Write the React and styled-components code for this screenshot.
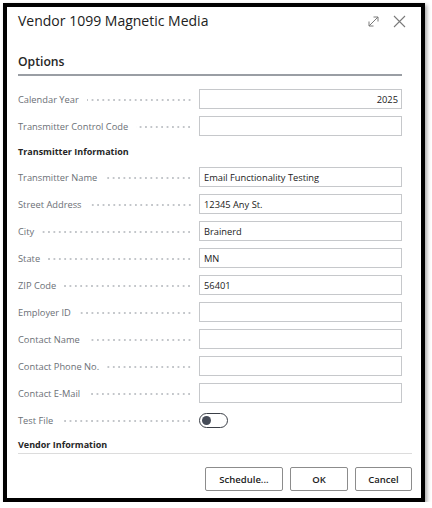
import React from "react";
import styled, { createGlobalStyle } from "styled-components";

const GlobalStyle = createGlobalStyle`
  html, body {
    margin: 0;
    padding: 0;
    background: #ffffff;
  }
  body {
    font-family: "Open Sans", "Noto Sans", "Liberation Sans", sans-serif;
    color: #212121;
  }
`;

const Frame = styled.div`
  box-sizing: border-box;
  margin: 3px 0 0 3px;
  width: 422px;
  height: 499px;
  border: 4px solid #000;
  background: #fff;
  box-shadow: 2px 2px 4px rgba(0, 0, 0, 0.35);
  display: flex;
  flex-direction: column;
`;

const Header = styled.div`
  display: flex;
  align-items: center;
  height: 28px;
  padding: 0 15px 0 11px;
`;

const Title = styled.h1`
  flex: 1;
  margin: 0;
  font-size: 14px;
  line-height: 20px;
  font-weight: 400;
  color: #212121;
`;

const IconButton = styled.span`
  display: flex;
  align-items: center;
  justify-content: center;
  width: 14px;
  height: 14px;
  margin-left: ${props => props.gap || 0}px;
  color: #7a7a7a;
`;

const Body = styled.div`
  flex: 1;
  padding: 0 19px 0 11px;
`;

const SectionTitle = styled.h2`
  margin: 17px 0 0;
  padding-bottom: 3px;
  font-size: 12.2px;
  line-height: 19px;
  font-weight: 600;
  color: #262626;
  border-bottom: 2px solid #9a9ea4;
`;

const Form = styled.div`
  display: grid;
  grid-template-columns: 181px 203px;
  row-gap: 7px;
  margin-top: 13px;
`;

const GroupTitle = styled.div`
  grid-column: 1 / -1;
  font-size: 9px;
  font-weight: 700;
  color: #262626;
  line-height: 14px;
  margin: 2px 0 1px;
`;

const Label = styled.div`
  display: flex;
  align-items: center;
  height: 20px;
  padding-right: 7px;
  font-size: 9.3px;
  color: #6b6f76;
  white-space: nowrap;
`;

const Leader = styled.span`
  flex: 1;
  height: 2px;
  margin: 2px 0 0 8px;
  background-image: radial-gradient(circle, #c3c6ca 0.7px, transparent 1px);
  background-size: 5.4px 2px;
  background-position: right center;
  background-repeat: repeat-x;
`;

const Input = styled.div`
  box-sizing: border-box;
  height: 20px;
  border: 1px solid #c6c8cb;
  padding: 0 3px 0 4px;
  display: flex;
  align-items: center;
  justify-content: ${props => (props.numeric ? "flex-end" : "flex-start")};
  font-size: 9.3px;
  color: #212121;
`;

const ToggleCell = styled.div`
  display: flex;
  align-items: center;
  height: 20px;
`;

const Toggle = styled.span`
  box-sizing: border-box;
  width: 29px;
  height: 15px;
  border: 1px solid #3b3f47;
  border-radius: 8px;
  display: flex;
  align-items: center;
  padding-left: 2px;

  &::before {
    content: "";
    width: 9px;
    height: 9px;
    border-radius: 50%;
    background: #464c58;
  }
`;

const VendorTitle = styled.div`
  margin: 8px -10px 0 0;
  padding-bottom: 1px;
  font-size: 9px;
  line-height: 14px;
  font-weight: 700;
  color: #262626;
  border-bottom: 1px solid #dcdcdc;
`;

const Footer = styled.div`
  display: flex;
  justify-content: flex-end;
  gap: 7px;
  padding: 0 9px 7px 0;
`;

const Button = styled.button`
  box-sizing: border-box;
  width: ${props => props.width}px;
  height: 24px;
  padding: 0;
  background: #fff;
  border: 1px solid #8c8c8c;
  border-radius: 2px;
  font-family: inherit;
  font-size: 9.5px;
  font-weight: 600;
  color: #222;
`;

const ExpandIcon = () => (
  <svg width="13" height="13" viewBox="0 0 13 13" fill="none" stroke="currentColor" strokeWidth="1">
    <path d="M2 11 L11 2" />
    <path d="M6.5 2 H11 V6.5" />
    <path d="M2 6.5 V11 H6.5" />
  </svg>
);

const CloseIcon = () => (
  <svg width="13" height="13" viewBox="0 0 13 13" fill="none" stroke="currentColor" strokeWidth="1.1">
    <path d="M1 1 L12 12 M12 1 L1 12" />
  </svg>
);

const fields = [
  { label: "Transmitter Name", value: "Email Functionality Testing" },
  { label: "Street Address", value: "12345 Any St." },
  { label: "City", value: "Brainerd" },
  { label: "State", value: "MN" },
  { label: "ZIP Code", value: "56401" },
  { label: "Employer ID", value: "" },
  { label: "Contact Name", value: "" },
  { label: "Contact Phone No.", value: "" },
  { label: "Contact E-Mail", value: "" }
];

const Field = ({ label, value, numeric }) => (
  <>
    <Label>
      {label}
      <Leader />
    </Label>
    <Input numeric={numeric}>{value}</Input>
  </>
);

const App = () => (
  <>
    <GlobalStyle />
    <Frame>
      <Header>
        <Title>Vendor 1099 Magnetic Media</Title>
        <IconButton>
          <ExpandIcon />
        </IconButton>
        <IconButton gap={12}>
          <CloseIcon />
        </IconButton>
      </Header>
      <Body>
        <SectionTitle>Options</SectionTitle>
        <Form>
          <Field label="Calendar Year" value="2025" numeric />
          <Field label="Transmitter Control Code" value="" />
          <GroupTitle>Transmitter Information</GroupTitle>
          {fields.map(f => (
            <Field key={f.label} label={f.label} value={f.value} />
          ))}
          <Label>
            Test File
            <Leader />
          </Label>
          <ToggleCell>
            <Toggle />
          </ToggleCell>
        </Form>
        <VendorTitle>Vendor Information</VendorTitle>
      </Body>
      <Footer>
        <Button width={78}>Schedule...</Button>
        <Button width={58}>OK</Button>
        <Button width={57}>Cancel</Button>
      </Footer>
    </Frame>
  </>
);

export default App;
